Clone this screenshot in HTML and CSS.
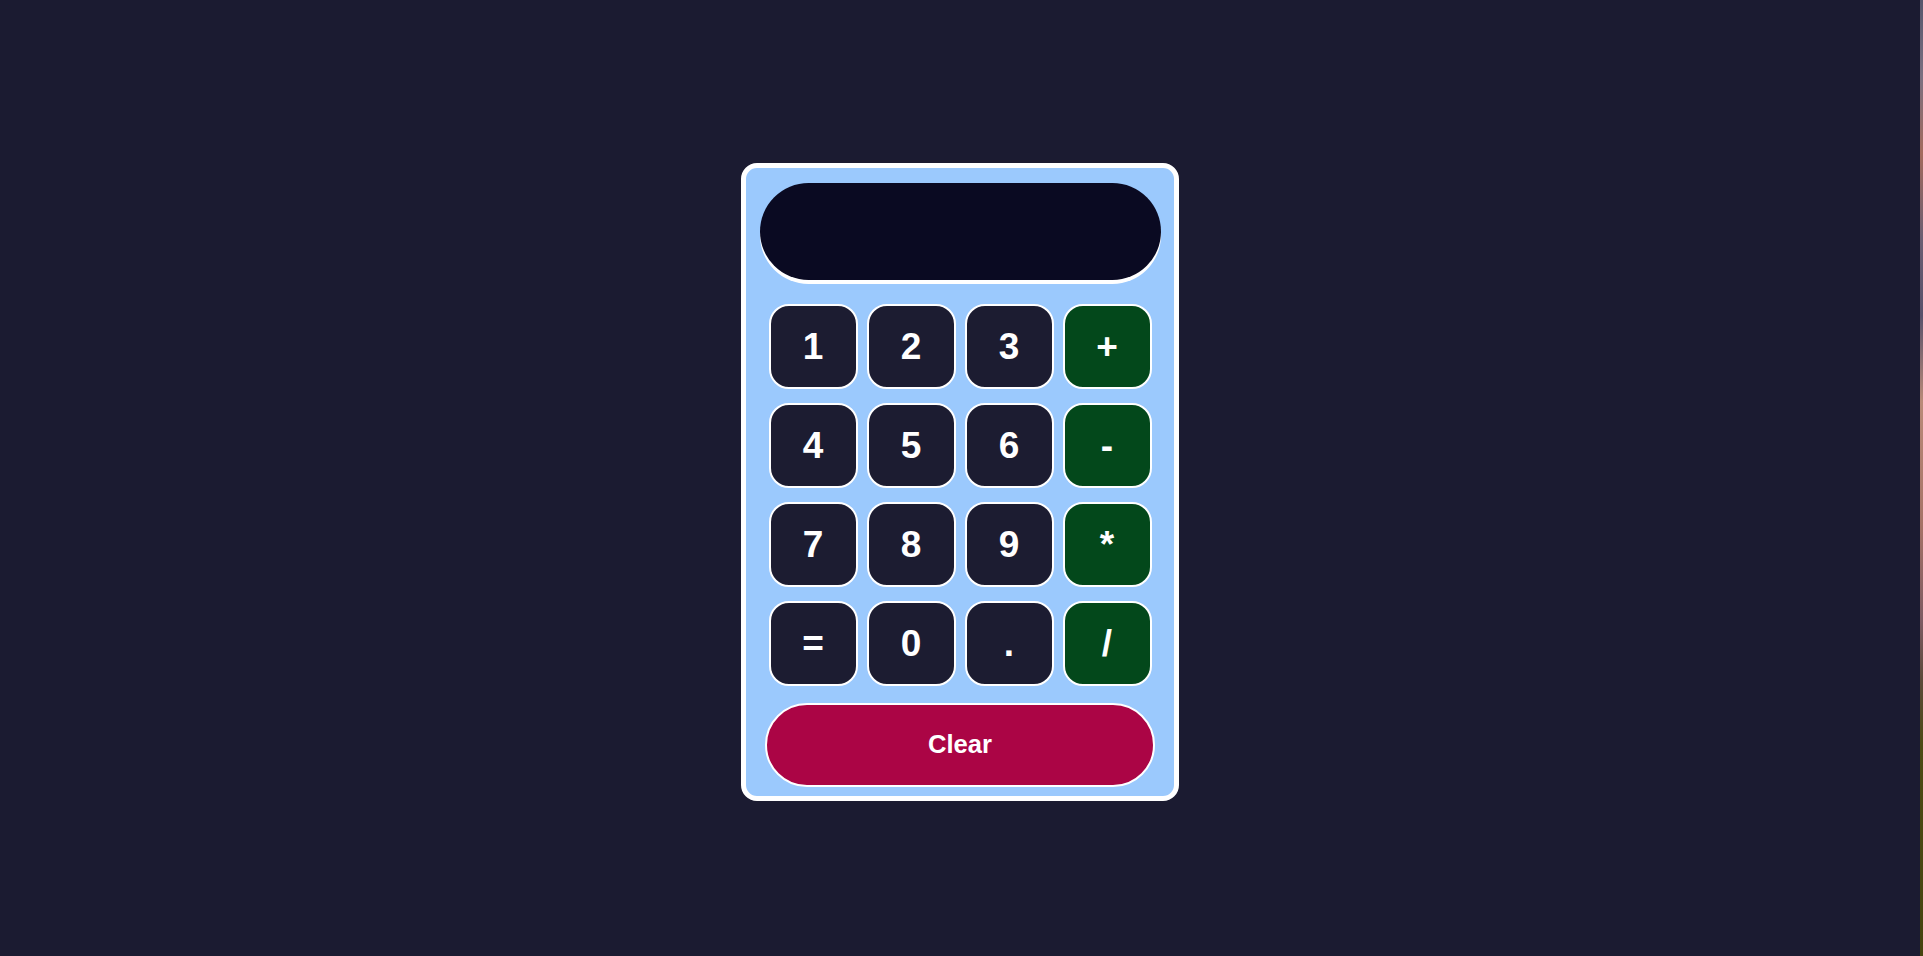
FILE: index.html
```html
<!DOCTYPE html>
<html lang="en">
<head>
<meta charset="utf-8">
<title>Calculator</title>
<link rel="stylesheet" href="styles.css">
</head>
<body>
<main class="stage">
  <div class="calc">
    <div class="display"></div>
    <div class="keys">
      <button class="key">1</button>
      <button class="key">2</button>
      <button class="key">3</button>
      <button class="key op">+</button>
      <button class="key">4</button>
      <button class="key">5</button>
      <button class="key">6</button>
      <button class="key op">-</button>
      <button class="key">7</button>
      <button class="key">8</button>
      <button class="key">9</button>
      <button class="key op">*</button>
      <button class="key">=</button>
      <button class="key">0</button>
      <button class="key">.</button>
      <button class="key op">/</button>
    </div>
    <button class="clear">Clear</button>
  </div>
</main>
<aside class="edge"></aside>
</body>
</html>
```

FILE: styles.css
```css
html, body {
  margin: 0;
  padding: 0;
  height: 100%;
}

body {
  display: flex;
  background: #1b1b31;
  font-family: "Liberation Sans", Arial, sans-serif;
}

.stage {
  flex: 1;
  display: flex;
  justify-content: center;
  align-items: center;
  padding-top: 7px;
}

.edge {
  width: 3px;
  background: linear-gradient(180deg, #55566c 0%, #7a6f80 8%, #a36a5c 16%, #6a5e72 25%, #57506a 33%, #b98a78 42%, #a57266 55%, #7c5a62 65%, #5c4a3a 71%, #4c4a14 78%, #45440f 100%);
}

.calc {
  width: 438px;
  box-sizing: border-box;
  border: 5px solid #ffffff;
  border-radius: 16px;
  background: #9bc9fd;
  padding: 15px 0 9px;
  display: flex;
  flex-direction: column;
  align-items: center;
}

.display {
  width: 401px;
  height: 97px;
  border-radius: 50px;
  background: #0a0a22;
  box-shadow: 0 4px 0 #ffffff;
  margin-bottom: 24px;
}

.keys {
  display: grid;
  grid-template-columns: repeat(4, 89px);
  grid-auto-rows: 85px;
  column-gap: 9px;
  row-gap: 14px;
}

.key {
  margin: 0;
  padding: 0;
  border: 2px solid #ffffff;
  border-radius: 20px;
  background: #1c1c31;
  color: #ffffff;
  font-family: "Liberation Sans", Arial, sans-serif;
  font-weight: bold;
  font-size: 37px;
  line-height: 1;
  cursor: pointer;
}

.key.op {
  background: #03481b;
}

.clear {
  margin: 17px 0 0;
  padding: 0;
  width: 390px;
  height: 84px;
  border: 2px solid #ffffff;
  border-radius: 42px;
  background: #ab0545;
  color: #ffffff;
  font-family: "Liberation Sans", Arial, sans-serif;
  font-weight: bold;
  font-size: 25.6px;
  cursor: pointer;
}
```
